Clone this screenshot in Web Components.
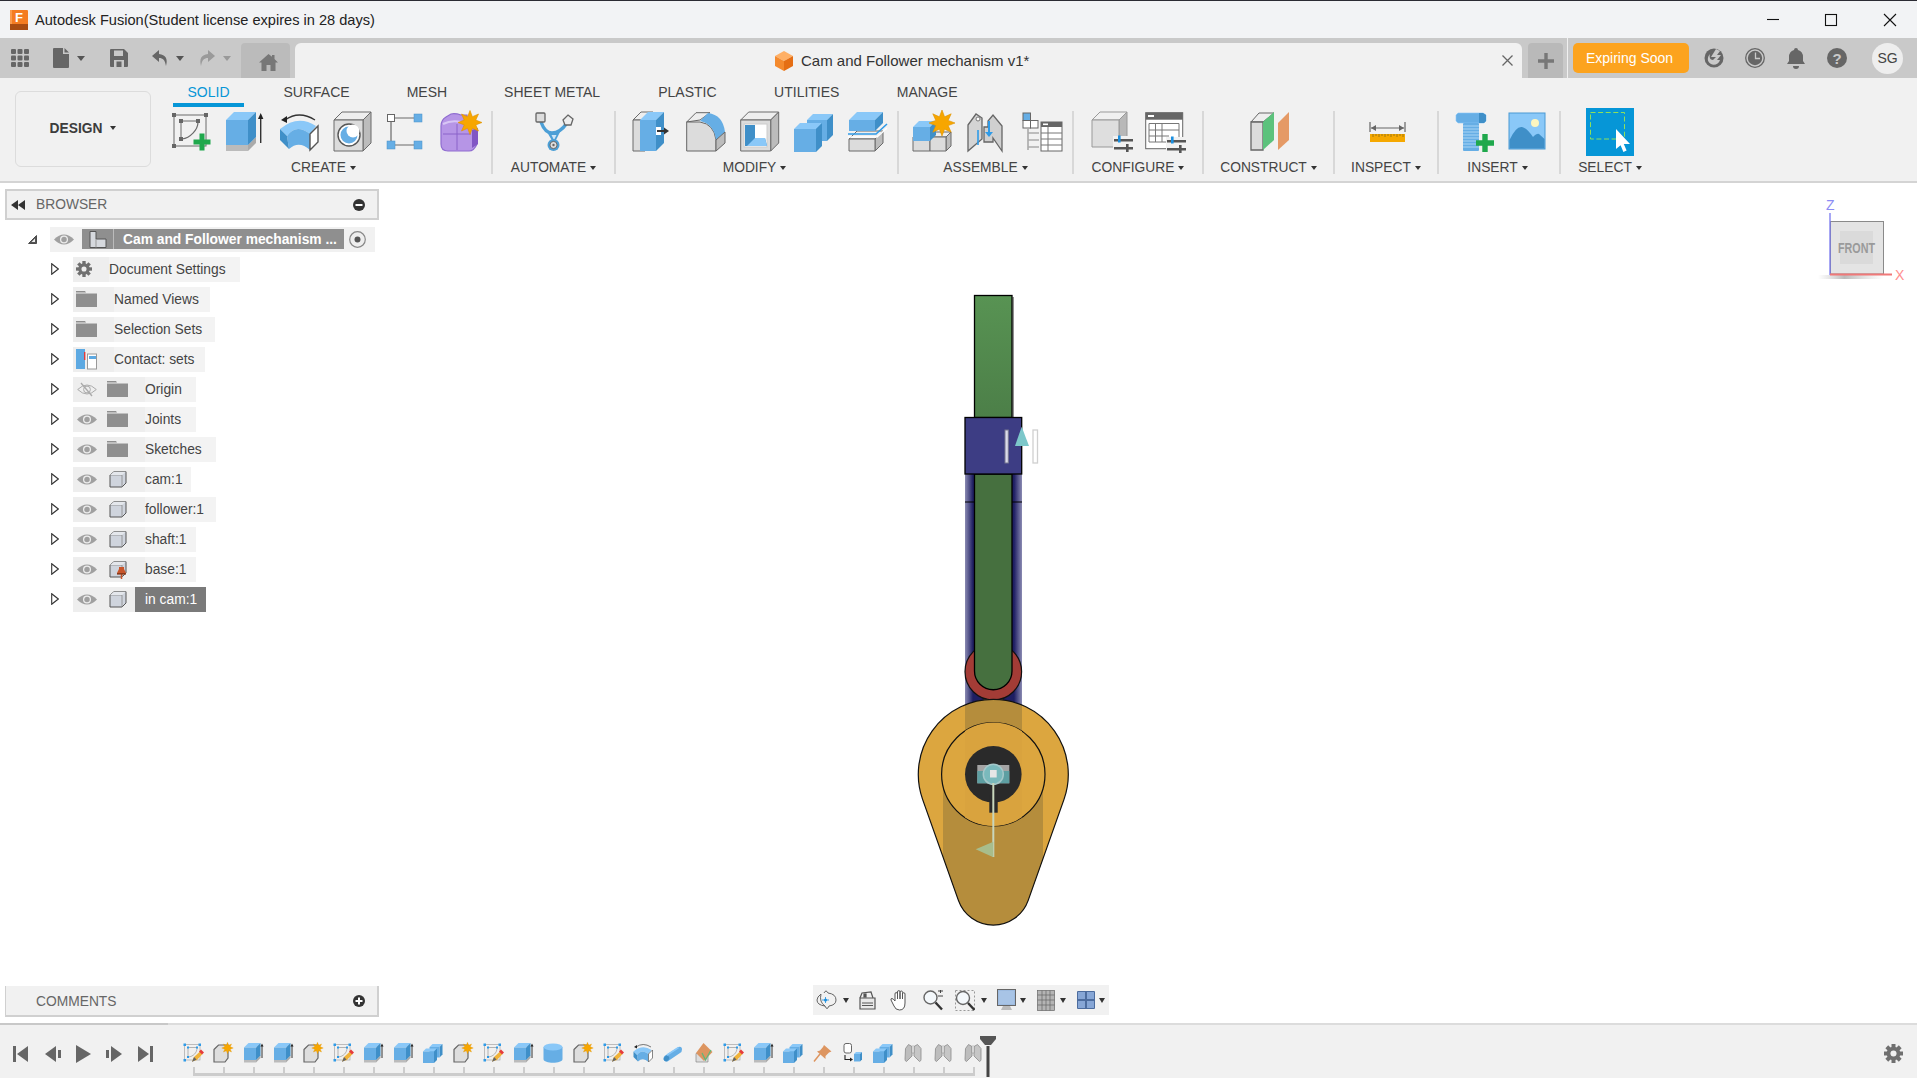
<!DOCTYPE html>
<html>
<head>
<meta charset="utf-8">
<title>Autodesk Fusion</title>
<style>
  html, body { margin: 0; padding: 0; background: #fff; }
  body { width: 1917px; height: 1078px; overflow: hidden; display: flex; flex-direction: column; font-family: 'Liberation Sans', sans-serif; }
</style>
</head>
<body>
  <title-bar></title-bar>
  <app-bar></app-bar>
  <ribbon-bar>
    <ribbon-group label="CREATE" style="width:326px;--ip:6px;--lp:9px">
      <fx-icon name="sketch"></fx-icon><fx-icon name="extrude"></fx-icon><fx-icon name="revolve"></fx-icon><fx-icon name="hole"></fx-icon><fx-icon name="nodes"></fx-icon><fx-icon name="form"></fx-icon>
    </ribbon-group>
    <ribbon-group label="AUTOMATE" style="width:121px;--ip:42px">
      <fx-icon name="automate"></fx-icon>
    </ribbon-group>
    <ribbon-group label="MODIFY" style="width:281px;--ip:16px;--lp:4px">
      <fx-icon name="presspull"></fx-icon><fx-icon name="fillet"></fx-icon><fx-icon name="shell"></fx-icon><fx-icon name="combine"></fx-icon><fx-icon name="split"></fx-icon>
    </ribbon-group>
    <ribbon-group label="ASSEMBLE" style="width:173px;--ip:14px">
      <fx-icon name="newcomp"></fx-icon><fx-icon name="joint"></fx-icon><fx-icon name="table"></fx-icon>
    </ribbon-group>
    <ribbon-group label="CONFIGURE" style="width:128px;--ip:17px">
      <fx-icon name="config"></fx-icon><fx-icon name="configtable"></fx-icon>
    </ribbon-group>
    <ribbon-group label="CONSTRUCT" style="width:129px;--ip:46px">
      <fx-icon name="plane"></fx-icon>
    </ribbon-group>
    <ribbon-group label="INSPECT" style="width:102px;--ip:32px">
      <fx-icon name="measure"></fx-icon>
    </ribbon-group>
    <ribbon-group label="INSERT" style="width:120px;--ip:17px;--lp:3px">
      <fx-icon name="bolt"></fx-icon><fx-icon name="picture" style="margin-left:-2px"></fx-icon>
    </ribbon-group>
    <ribbon-group label="SELECT" style="width:98px;--ip:25px;border:0" class="last">
      <fx-icon name="select" size="48" style="margin-top:-4px"></fx-icon>
    </ribbon-group>
  </ribbon-bar>
  <model-canvas>
    <browser-panel>
      <tree-root label="Cam and Follower mechanism ..."></tree-root>
      <tree-row icon="gear" label="Document Settings" style="--iw:36px;--w:167px"></tree-row>
      <tree-row icon="folder" label="Named Views" style="--w:137px"></tree-row>
      <tree-row icon="folder" label="Selection Sets" style="--w:142px"></tree-row>
      <tree-row icon="contact" label="Contact: sets" style="--w:132px"></tree-row>
      <tree-row eye="off" icon="folder" label="Origin" style="--w:123px"></tree-row>
      <tree-row eye="on" icon="folder" label="Joints" style="--w:123px"></tree-row>
      <tree-row eye="on" icon="folder" label="Sketches" style="--w:143px"></tree-row>
      <tree-row eye="on" icon="body" label="cam:1" style="--w:118px"></tree-row>
      <tree-row eye="on" icon="body" label="follower:1" style="--w:143px"></tree-row>
      <tree-row eye="on" icon="body" label="shaft:1" style="--w:123px"></tree-row>
      <tree-row eye="on" icon="pinned" label="base:1" style="--w:123px"></tree-row>
      <tree-row eye="on" icon="body" label="in cam:1" selected style="--w:133px"></tree-row>
    </browser-panel>
    <comments-panel></comments-panel>
    <cam-model></cam-model>
    <view-cube></view-cube>
    <nav-bar></nav-bar>
  </model-canvas>
  <time-line></time-line>

<script>
const BLUE = { top: '#8ac8f8', front: '#66aee5', side: '#3f8fc8' };
const GREY = { top: '#eeeeee', front: '#dcdcdc', side: '#bcbcbc', line: '#6a6a6a' };

function star(cx, cy, r, n, fill) {
    let pts = [];
    for (let i = 0; i < n * 2; i++) {
        const a = Math.PI * i / n - Math.PI / 2;
        const rr = i % 2 ? r * 0.52 : r;
        pts.push((cx + rr * Math.cos(a)).toFixed(1) + ',' + (cy + rr * Math.sin(a)).toFixed(1));
    }
    return `<polygon points="${pts.join(' ')}" fill="${fill || '#f7a600'}" stroke="#dd9200" stroke-width=".6"/>`;
}

function gear(c, r, col, hole) {
    let s = '';
    for (let i = 0; i < 4; i++) {
        const a = i * Math.PI / 4, dx = Math.cos(a) * r, dy = Math.sin(a) * r;
        s += `<line x1="${c - dx}" y1="${c - dy}" x2="${c + dx}" y2="${c + dy}" stroke="${col}" stroke-width="${r * 0.42}"/>`;
    }
    return s + `<circle cx="${c}" cy="${c}" r="${r * 0.72}" fill="${col}"/><circle cx="${c}" cy="${c}" r="${r * 0.32}" fill="${hole}"/>`;
}

function poly(points, fill, stroke, w) {
    return `<polygon points="${points}" fill="${fill}"${stroke ? ` stroke="${stroke}" stroke-width="${w || 1}" stroke-linejoin="round"` : ''}/>`;
}

function cube(x, y, w, h, d, c) {
    c = c || BLUE;
    const st = c.line ? c.line : '';
    return poly(`${x},${y} ${x + d},${y - d} ${x + w + d},${y - d} ${x + w},${y}`, c.top, st)
        + poly(`${x + w},${y} ${x + w + d},${y - d} ${x + w + d},${y + h - d} ${x + w},${y + h}`, c.side, st)
        + poly(`${x},${y} ${x + w},${y} ${x + w},${y + h} ${x},${y + h}`, c.front, st);
}

function sliders(x, y) {
    return `<rect x="${x}" y="${y}" width="19" height="2.5" fill="#555"/><rect x="${x}" y="${y + 8}" width="19" height="2.5" fill="#555"/>`
        + `<rect x="${x + 4}" y="${y - 3.5}" width="2.6" height="7" fill="#1a8fe0"/><rect x="${x + 12}" y="${y + 5}" width="2.6" height="8" fill="#555"/>`;
}

const plus = (cx, cy, a, t) => `<path d="M${cx - t / 2} ${cy - a}h${t}v${a - t / 2}h${a - t / 2}v${t}h${-(a - t / 2)}v${a - t / 2}h${-t}v${-(a - t / 2)}h${-(a - t / 2)}v${-t}h${a - t / 2}z" fill="#1fa84c"/>`;

const ICONS = {
    sketch: `<g fill="none" stroke="#6a6a6a"><rect x="3" y="3" width="32" height="31"/><path d="M10 9H27"/><path d="M10 9V27"/><path d="M27 10C27 18 19 26 11 27" stroke-width="1.2"/></g>
        <g fill="#666"><rect x="1" y="1" width="4" height="4"/><rect x="33" y="1" width="4" height="4"/><rect x="1" y="32" width="4" height="4"/><rect x="8" y="7" width="4" height="4"/><rect x="25" y="7" width="4" height="4"/><rect x="8" y="25" width="4" height="4"/></g>` + plus(31, 30, 8.5, 5),
    extrude: cube(1, 33, 22, 6, 8, { top: '#ccc', side: '#aaa', front: '#bbb' }) + cube(1, 8, 22, 25, 8)
        + `<path d="M35.7 31V6" stroke="#333" stroke-width="1.4"/><path d="M33 7L35.7 1 38.4 7z" fill="#222"/>`,
    revolve: `<path d="M6 8Q20 -2 36 8" fill="none" stroke="#333" stroke-width="1.3"/><path d="M2 8L8 4 8 11z" fill="#222"/>
        <path d="M1 17Q19 2 37 14L31 22Q17 11 8 24z" fill="${BLUE.top}"/><path d="M8 24Q17 11 31 22V38Q20 28 10 37z" fill="${BLUE.front}"/><path d="M1 17L8 24 10 37 1 28z" fill="${BLUE.side}"/>
        <path d="M31 22L39 14V30L31 38z" fill="#fff" stroke="#555" stroke-width="1.4"/>`,
    hole: cube(1, 8, 29, 31, 8, GREY) + `<circle cx="16" cy="23" r="11" fill="#fff" stroke="#555" stroke-width="1.4"/><circle cx="16" cy="23" r="8.5" fill="${BLUE.front}"/><circle cx="20" cy="19" r="6.5" fill="#fff"/>`,
    nodes: `<g stroke="#6a6a6a" stroke-width="1.2"><path d="M8 6H27M4 10V29M8 33H27"/></g><rect x=".5" y="2.5" width="7" height="7" fill="#fff" stroke="#666"/>
        <rect x="27" y="2" width="8" height="8" fill="#66aee5" stroke="#4a90c8" stroke-width=".5"/><rect x="0" y="29" width="8" height="8" fill="#66aee5" stroke="#4a90c8" stroke-width=".5"/><rect x="27" y="29" width="8" height="8" fill="#66aee5" stroke="#4a90c8" stroke-width=".5"/>`,
    form: `<path d="M0 14Q0 8 5 5L10 2Q14 1 20 3H26V8L36 18V32Q33 39 28 39H7Q0 39 0 32z" fill="#b695e6" stroke="#8f6cd0" stroke-width="1.2"/><path d="M31 18L37 16V32L31 36z" fill="#8157c4"/>
        <path d="M2 22H30M16 12V38" stroke="#8a63c9" stroke-width="1"/><path d="M2 12Q10 8 20 10" stroke="#d8c6f5" stroke-width="2" fill="none"/>` + star(29, 10.5, 12, 8),
    automate: `<path d="M6 10Q10 21 17 21Q25 21 32 11" fill="none" stroke="#4c9fd6" stroke-width="3.4"/><path d="M12 20H25L19 32z" fill="#4c9fd6"/><path d="M16.5 23H21.5L19 28z" fill="#cfe6f7"/>
        <rect x="1" y="1" width="9" height="9" rx="1" fill="#ddd" stroke="#666" stroke-width="1.3"/><path d="M33 3L38 7 36 13 30 13 28 8z" fill="#eee" stroke="#666" stroke-width="1.3"/>
        <circle cx="18.5" cy="33" r="6" fill="#4c9fd6"/><circle cx="18.5" cy="33" r="3.6" fill="#ddd" stroke="#666"/><circle cx="18.5" cy="33" r="1.2" fill="#666"/>`,
    presspull: cube(1, 8, 12, 31, 8, GREY) + cube(8, 8, 16, 31, 8) + `<rect x="24" y="15" width="5" height="8" fill="#fff"/><path d="M25 19H33" stroke="#333" stroke-width="2"/><path d="M32 15.5L37 19 32 22.5z" fill="#333"/>`,
    fillet: `<path d="M.7 10L10 .7H24L14 8z" fill="${GREY.top}" stroke="#666"/><path d="M.7 10H14Q28 12 30 28V39H.7z" fill="${GREY.front}" stroke="#666"/>
        <path d="M14 9L22 1Q37 3 39 20L30 28Q28 12 14 9z" fill="${BLUE.front}"/><path d="M30 28L39 20V31L30 39z" fill="${GREY.side}" stroke="#666"/>`,
    shell: cube(.7, 8, 30, 31, 8, GREY) + `<rect x="4" y="12" width="23" height="23" fill="#fff" stroke="#ccc"/><path d="M5 13H15V26H25L27 34H5z" fill="${BLUE.side}"/><path d="M15 26H25L27 34H7z" fill="${BLUE.top}"/><rect x="15" y="14" width="11" height="12" fill="#fff"/>`,
    combine: cube(13, 8, 20, 21, 6) + cube(0, 17, 22, 23, 6),
    split: cube(1, 27, 26, 12, 8, GREY) + cube(1, 8, 26, 11, 8) + `<path d="M0 22H28L39 12" fill="none" stroke="#2f9be8" stroke-width="1.6"/><path d="M0 25H29L39 16" fill="none" stroke="#fff" stroke-width="1.4"/>`,
    newcomp: cube(0, 25, 17, 14, 0, GREY) + cube(17, 25, 16, 14, 5, GREY) + cube(0, 15, 17, 14, 6) + star(29, 11, 13, 8),
    joint: `<path d="M1 13L9 2 15 6V27L1 39z" fill="#d4d4d4" stroke="#666" stroke-width="1.3"/><path d="M35 14L26 3 21 9V15H17V30H26V26L35 39z" fill="#d0d0d0" stroke="#666" stroke-width="1.3"/>
        <circle cx="11" cy="7" r="2" fill="#fff" stroke="#777"/><path d="M11 18V33" stroke="#2f9be8" stroke-width="1.6"/><path d="M22 9V22" stroke="#2f9be8" stroke-width="2"/><path d="M18 20H26L22 25z" fill="#2f9be8"/>`,
    table: `<rect x="2" y="1" width="7.5" height="7.5" fill="#66aee5" stroke="#666"/><rect x="2" y="8.5" width="7.5" height="7.5" fill="#fff" stroke="#666"/><rect x="9.5" y="8.5" width="7.5" height="7.5" fill="#fff" stroke="#666"/>
        <path d="M7 16V38M7 21H18M7 28H18M7 35H18" stroke="#aaa" stroke-width="1.6" fill="none"/><rect x="20" y="10" width="21" height="29" fill="#fff" stroke="#666"/><rect x="20" y="10" width="21" height="5" fill="#666"/><rect x="22" y="11.5" width="5" height="1.6" fill="#fff"/>
        <path d="M20 21H41M20 27H41M20 33H41M27 15V39" stroke="#777" fill="none"/>`,
    config: cube(1, 8, 27, 27, 8, { top: '#f0f0f0', side: '#b8b8b8', front: '#dedede', line: '#999' }) + `<rect x="22" y="24" width="20" height="15" fill="#f1f1f1"/>` + sliders(23, 27),
    configtable: `<rect x=".7" y=".7" width="37" height="36" fill="#fff" stroke="#666"/><rect x=".7" y=".7" width="37" height="7" fill="#666"/><rect x="3" y="3" width="6" height="2" fill="#fff"/>
        <path d="M4 11.5H34V30M4 11.5V30H24M4 18H34M4 24H24M10.5 11.5V30M17 11.5V30" fill="none" stroke="#777"/><rect x="21" y="25" width="20" height="15" fill="#f1f1f1"/>` + sliders(22, 28),
    plane: `<path d="M1 10L9 1H24L13 10z" fill="#eee" stroke="#666"/><path d="M1 10H13V38H1z" fill="#dcdcdc" stroke="#666" stroke-width="1.3"/><path d="M13 10L24 0V28L13 38z" fill="#5cc27c"/><path d="M28 11L39 0V28L28 38z" fill="#e59a66"/>`,
    measure: `<path d="M3 10V20M38 10V20M4 16H37" stroke="#666" stroke-width="1.2" fill="none"/><path d="M4 16L9 13V19zM37 16L32 13V19z" fill="#666"/><rect x="3" y="22" width="35" height="8" fill="#f5a800"/>
        <path d="M6 22v3M9 22v2M12 22v3M15 22v2M18 22v3M21 22v2M24 22v3M27 22v2M30 22v3M33 22v2M36 22v3" stroke="#8a6a10" stroke-width=".8"/>`,
    bolt: `<path d="M0 3L2 1H27L30 3V9L28 11H2L0 9z" fill="#66aee5" stroke="#8ac8f8" stroke-width=".6"/><path d="M23 1H27L30 3V9L28 11H23z" fill="${BLUE.side}"/>
        <rect x="7" y="11" width="16" height="28" rx="1" fill="#66aee5"/><path d="M7 14H23M7 17H23M7 20H23M7 23H23M7 26H23M7 29H23M7 32H23M7 35H23" stroke="#a9d5f5" stroke-width="1"/>` + plus(29, 31, 9, 5.4),
    picture: `<rect x="1" y="1" width="36" height="36" fill="#8ac8f8" stroke="#4a9ad4"/><circle cx="27" cy="11" r="4" fill="#fdf6c0"/><path d="M1.5 28Q8 14 14 15Q19 16 25 25Q29 21 31 22L36.5 27V36.5H1.5z" fill="#3f8fc8"/>`,
    select: `<rect width="48" height="48" fill="#0696d7"/><rect x="4.5" y="4.5" width="34" height="26.5" fill="none" stroke="#8fe05a" stroke-dasharray="5 2.6"/><path d="M30 21V41L34.6 37.2 37.4 44 40.6 42.6 37.8 36H44z" fill="#fff"/>`,
    /* timeline features */
    tlsketch: `<rect x="3" y="3" width="31" height="31" fill="none" stroke="#9a9a9a" stroke-width="1.2"/><path d="M10 9V28M10 9H28M28 10C28 20 20 27 11 28" fill="none" stroke="#888" stroke-width="1.2"/><g fill="#2f9be8"><rect x="1" y="1" width="5" height="5"/><rect x="31" y="1" width="5" height="5"/><rect x="1" y="32" width="5" height="5"/><rect x="8" y="7" width="4" height="4"/><rect x="26" y="7" width="4" height="4"/><rect x="8" y="26" width="4" height="4"/></g>
        <path d="M18 37L22 28 34 17 39 22 28 34z" fill="#f0b33a"/><path d="M32 17L36 13 42 19 38 23z" fill="#e53c3c"/><path d="M18 38L22 28 27 33z" fill="#666"/>`,
    tlstar: `<path d="M2 13L11 4H30V30L24 38H2z" fill="#dedede" stroke="#666" stroke-width="2.4"/>` + star(29, 10, 11.5, 8),
    tlextrude: cube(2, 34, 24, 5, 9, { top: '#ccc', side: '#aaa', front: '#bbb' }) + cube(2, 9, 24, 25, 9) + `<path d="M38 30V6" stroke="#333" stroke-width="2"/><path d="M35 7L38 1 41 7z" fill="#222"/>`,
    tlcyl: `<path d="M1 8V32C1 42 39 42 39 32V8z" fill="${BLUE.front}"/><ellipse cx="20" cy="8" rx="19" ry="7" fill="${BLUE.top}"/>`,
    tlpipe: `<path d="M3 26L31 8Q38 6 38 13Q38 18 34 20L9 37Q2 38 1 32Q1 28 3 26z" fill="${BLUE.front}"/><ellipse cx="7" cy="31" rx="5" ry="6" transform="rotate(40 7 31)" fill="${BLUE.side}"/><path d="M8 24L31 9" stroke="${BLUE.top}" stroke-width="3"/>`,
    tldiamond: `<path d="M6 21V38H30V21z" fill="#ddd" stroke="#888" stroke-width="1.4"/><path d="M21 0L39 18 22 36 6 20z" fill="#dd9560"/><path d="M18 20L25 34 36 14" fill="none" stroke="#5cb87a" stroke-width="2.4"/>`,
    tlpin: `<path d="M22 4L37 17 32 19 25 26 25 32 8 17 14 15 20 8z" fill="#dd9560"/><path d="M14 22L2 37" stroke="#dd9560" stroke-width="3"/>`,
    tlmove: `<rect x="2" y="1" width="15" height="19" rx="4" fill="#fff" stroke="#666" stroke-width="2"/><path d="M4 24V33H16" fill="none" stroke="#222" stroke-width="2.2"/><path d="M14 29L20 33 14 37z" fill="#222"/>` + cube(22, 22, 12, 15, 4),
    tljoint: `<path d="M5 11L11 3 18 7V26L7 37Q4 36 4 33z" fill="#bdbdbd" stroke="#8a8a8a" stroke-width="1.6"/><path d="M22 7L29 3 36 11V33Q36 36 33 37L22 26z" fill="#c6c6c6" stroke="#8a8a8a" stroke-width="1.6"/><path d="M18 7Q20 3 22 7V20H18z" fill="#eee" stroke="#8a8a8a"/>`
};
ICONS.tlcombine = ICONS.combine;

class FxIcon extends HTMLElement {
    constructor() {
        super();
        const size = this.getAttribute('size') || 40;
        const box = this.getAttribute('name') === 'select' ? 48 : 40;
        this.attachShadow({ mode: 'open' }).innerHTML = `
            <style>:host{display:block;width:${size}px;height:${size}px;flex:none} svg{display:block;overflow:visible}</style>
            <svg width="${size}" height="${size}" viewBox="0 0 ${box} ${box}">${ICONS[this.getAttribute('name')] || ''}</svg>`;
    }
}
customElements.define('fx-icon', FxIcon);

class TitleBar extends HTMLElement {
    constructor() {
        super();
        this.attachShadow({ mode: 'open' }).innerHTML = `
        <style>
            :host { display: flex; align-items: center; height: 37px; flex: none; background: #f2f3f5; border-top: 1px solid #2b2b33; font: 14.6px 'Liberation Sans', sans-serif; color: #222; }
            svg { display: block; flex: none; }
            .logo { margin-left: 10px; }
            .txt { margin-left: 7px; flex: 1; white-space: nowrap; }
            .ctl { margin-right: 19px; }
        </style>
        <svg class="logo" width="18" height="20" viewBox="0 0 18 20"><rect width="18" height="20" rx="1" fill="#f47c22"/><rect y="14" width="18" height="6" fill="#a84c12"/><rect width="2" height="14" fill="#fa9a4c"/><text x="9" y="12" text-anchor="middle" font-family="Liberation Sans" font-weight="700" font-size="13" fill="#fff">F</text></svg>
        <span class="txt">Autodesk Fusion(Student license expires in 28 days)</span>
        <svg width="132" height="14" viewBox="0 0 132 14" class="ctl" fill="none" stroke="#111" stroke-width="1.1"><path d="M1 6.500H13"/><rect x="59.500" y="1.500" width="11" height="11"/><path d="M118 1L130 13M130 1L118 13"/></svg>`;
    }
}
customElements.define('title-bar', TitleBar);

class AppBar extends HTMLElement {
    constructor() {
        super();
        this.attachShadow({ mode: 'open' }).innerHTML = `
        <style>
            :host { display: flex; align-items: center; height: 40px; flex: none; background: #c9c9c9; padding-left: 11px; font-family: 'Liberation Sans', sans-serif; }
            svg { display: block; flex: none; }
            .caret { width: 0; height: 0; flex: none; border: 4px solid transparent; border-top: 5px solid #555; border-bottom: 0; margin-left: 8px; }
            .caret.dim { border-top-color: #999; }
            .home { align-self: flex-end; height: 35px; width: 49px; margin-left: 10px; background: #bbb; border-radius: 4px 4px 0 0; display: flex; align-items: center; justify-content: center; flex: none; padding: 3px 0 0 5px; box-sizing: border-box; }
            .doc { align-self: flex-end; height: 35px; width: 1227px; margin-left: 5px; box-sizing: border-box; background: #f1f1f1; border-radius: 6px 6px 0 0; display: flex; align-items: center; padding: 0 9px 0 480px; font-size: 15px; color: #333; flex: none; }
            .doc span { margin-left: 8px; white-space: nowrap; }
            .close { margin-left: auto; }
            .plus { align-self: flex-end; height: 35px; width: 35px; margin-left: 6px; background: #b9b9b9; border-radius: 4px 4px 0 0; display: flex; align-items: center; justify-content: center; flex: none; }
            .div { width: 1px; align-self: stretch; background: #f0f0f0; margin-left: 4px; flex: none; }
            .exp { width: 116px; height: 30px; margin-left: 5px; background: #fca31e; color: #fff; border-radius: 5px; font-size: 14px; display: flex; align-items: center; justify-content: center; flex: none; padding-right: 3px; box-sizing: border-box; }
            .right { display: flex; align-items: center; gap: 21px; margin-left: 15px; }
            .sg { width: 31px; height: 31px; margin-left: 25px; border-radius: 50%; background: #eee; color: #444; font-size: 14px; display: flex; align-items: center; justify-content: center; flex: none; }
        </style>
        <svg width="18" height="18" viewBox="0 0 18 18" fill="#666"><rect width="5" height="5" rx="1"/><rect x="6.500" width="5" height="5" rx="1"/><rect x="13" width="5" height="5" rx="1"/><rect y="6.500" width="5" height="5" rx="1"/><rect x="6.500" y="6.500" width="5" height="5" rx="1"/><rect x="13" y="6.500" width="5" height="5" rx="1"/><rect y="13" width="5" height="5" rx="1"/><rect x="6.500" y="13" width="5" height="5" rx="1"/><rect x="13" y="13" width="5" height="5" rx="1"/></svg>
        <svg style="margin-left:24px" width="16" height="20" viewBox="0 0 16 20"><path d="M1 0H10V6H16V19Q16 20 15 20H1Q0 20 0 19V1Q0 0 1 0zM11.500 0L16 4.500H11.500z" fill="#666"/></svg>
        <div class="caret"></div>
        <svg style="margin-left:25px" width="18" height="18" viewBox="0 0 18 18"><path d="M1 0H14L18 4V17Q18 18 17 18H1Q0 18 0 17V1Q0 0 1 0z" fill="#666"/><rect x="4" y="1.500" width="9" height="5.500" fill="#c9c9c9"/><rect x="4" y="11" width="10" height="7" fill="#c9c9c9"/><rect x="6.500" y="12.500" width="5" height="5.500" fill="#666"/></svg>
        <svg style="margin-left:24px" width="17" height="16" viewBox="0 0 17 16"><path d="M7 0L0 6 7 12V8C11 8 13 10 14 16Q17 5 7 4z" fill="#666"/></svg>
        <div class="caret" style="margin-left:7px"></div>
        <svg style="margin-left:14px" width="17" height="16" viewBox="0 0 17 16"><path d="M10 0L17 6 10 12V8C6 8 4 10 3 16Q0 5 10 4z" fill="#9a9a9a"/></svg>
        <div class="caret dim" style="margin-left:8px"></div>
        <div class="home"><svg width="19" height="18" viewBox="0 0 19 18"><path d="M9.500 1L0 9.500H2.500V18H7.500V12H11.500V18H16.500V9.500H19L15.500 6V2H13V3.700z" fill="#777"/></svg></div>
        <div class="doc">
            <svg width="18" height="20" viewBox="0 0 18 20"><path d="M9 0L18 5 9 10 0 5z" fill="#ffb066"/><path d="M0 5L9 10V20L0 15z" fill="#f48a2e"/><path d="M18 5L9 10V20L18 15z" fill="#e56e14"/></svg>
            <span>Cam and Follower mechanism v1*</span>
            <svg class="close" width="11" height="11" viewBox="0 0 11 11"><path d="M.5.5L10.500 10.500M10.500.5L.5 10.500" stroke="#666" stroke-width="1.300"/></svg>
        </div>
        <div class="plus"><svg width="16" height="16" viewBox="0 0 16 16"><path d="M6.300 0H9.700V6.300H16V9.700H9.700V16H6.300V9.700H0V6.300H6.300z" fill="#777"/></svg></div>
        <div class="div"></div>
        <div class="exp">Expiring Soon</div>
        <div class="right">
            <svg width="20" height="20" viewBox="0 0 20 20"><circle cx="10" cy="10" r="9.500" fill="#666"/><path d="M12 1L7 9H12L9 12C6 12 5 9 6 6 3 9 3 14 7 16 10 18 15 16 16 12L13 12 17 7H13L16 3z" fill="#c9c9c9"/></svg>
            <svg width="20" height="20" viewBox="0 0 20 20"><circle cx="10" cy="10" r="9.300" fill="#c9c9c9" stroke="#666" stroke-width="1.300"/><circle cx="10" cy="10" r="7.200" fill="#666"/><path d="M10.500 4.500V10.500H15" stroke="#c9c9c9" stroke-width="1.300" fill="none"/></svg>
            <svg width="20" height="21" viewBox="0 0 20 21"><path d="M10 0Q12 0 12 2Q17 3.500 17 9V13L19 16H1L3 13V9Q3 3.500 8 2Q8 0 10 0z" fill="#666"/><path d="M7 18H13Q13 21 10 21 7 21 7 18z" fill="#666"/></svg>
            <svg width="20" height="20" viewBox="0 0 20 20"><circle cx="10" cy="10" r="10" fill="#666"/><text x="10" y="15.500" text-anchor="middle" font-family="Liberation Sans" font-weight="700" font-size="15" fill="#c9c9c9">?</text></svg>
        </div>
        <div class="sg">SG</div>`;
    }
}
customElements.define('app-bar', AppBar);

const ribbonTpl = document.createElement('template');
ribbonTpl.innerHTML = `
    <style>
        :host { display: flex; height: 103px; flex: none; background: #f1f1f1; border-bottom: 2px solid #d4d4d4; padding-left: 15px; font-family: 'Liberation Sans', sans-serif; }
        .design { width: 136px; height: 76px; box-sizing: border-box; margin-top: 13px; padding-bottom: 2px; border: 1.5px solid #dcdcdc; border-radius: 6px; display: flex; align-items: center; justify-content: center; gap: 8px; font-weight: 700; font-size: 13.8px; color: #3c3c3c; flex: none; }
        .caret { width: 0; height: 0; border: 3.5px solid transparent; border-top: 4.5px solid #333; border-bottom: 0; }
        .col { margin-left: 14px; }
        .tabs { display: flex; gap: 25px; height: 29px; padding-left: 8px; margin-bottom: 4px; font-size: 14px; color: #444; }
        .tabs div { padding: 7px 14.500px 0; box-sizing: border-box; height: 29px; white-space: nowrap; line-height: 14px; }
        .tabs .on { color: #0696d7; border-bottom: 4px solid #0696d7; }
        .groups { display: flex; }
    </style>
    <div class="design">DESIGN<span class="caret"></span></div>
    <div class="col">
        <div class="tabs"><div class="on">SOLID</div><div>SURFACE</div><div style="margin-left:3px">MESH</div><div style="margin-left:3px">SHEET METAL</div><div style="margin-left:4.200px">PLASTIC</div><div style="margin-left:3.500px">UTILITIES</div><div style="margin-left:3.400px">MANAGE</div></div>
        <div class="groups"><slot></slot></div>
    </div>`;
class RibbonBar extends HTMLElement {
    constructor() {
        super();
        this.attachShadow({ mode: 'open' }).appendChild(ribbonTpl.content.cloneNode(true));
    }
}
customElements.define('ribbon-bar', RibbonBar);

class RibbonGroup extends HTMLElement {
    constructor() {
        super();
        this.attachShadow({ mode: 'open' }).innerHTML = `
        <style>
            :host { display: block; height: 63px; flex: none; border-right: 2px solid #d8d8d8; }
            .icons { display: flex; gap: 14px; height: 45px; padding: 1px 0 0 var(--ip, 0); box-sizing: border-box; }
            .lbl { display: flex; align-items: center; justify-content: center; gap: 4px; height: 23px; font-size: 13.8px; color: #444; padding-right: var(--lp, 0); white-space: nowrap; }
            .caret { width: 0; height: 0; border: 3.5px solid transparent; border-top: 4.5px solid #333; border-bottom: 0; }
        </style>
        <div class="icons"><slot></slot></div>
        <div class="lbl">${this.getAttribute('label')}<span class="caret"></span></div>`;
    }
}
customElements.define('ribbon-group', RibbonGroup);

class ModelCanvas extends HTMLElement {
    constructor() {
        super();
        this.attachShadow({ mode: 'open' }).innerHTML = `
        <style>
            :host { display: flex; flex: 1; min-height: 0; flex-direction: column; justify-content: space-between; position: relative; background: #fff; padding: 6px 0 6px 5px; box-sizing: border-box; }
        </style>
        <slot></slot>`;
    }
}
customElements.define('model-canvas', ModelCanvas);

class BrowserPanel extends HTMLElement {
    constructor() {
        super();
        this.attachShadow({ mode: 'open' }).innerHTML = `
        <style>
            :host { display: block; width: 374px; margin-left: -5px; padding-left: 5px; font-family: 'Liberation Sans', sans-serif; position: relative; z-index: 1; }
            .head { display: flex; align-items: center; height: 31px; box-sizing: border-box; background: #f1f1f1; border: 2px solid #d0d0d0; font-size: 13.8px; color: #666; margin-bottom: 6.500px; }
            .head svg { display: block; flex: none; }
            .t { margin-left: 11px; flex: 1; }
            .rows { margin-left: -5px; display: flex; flex-direction: column; gap: 5px; }
        </style>
        <div class="head">
            <svg style="margin-left:4px" width="14" height="10" viewBox="0 0 14 10"><path d="M7 0V10L0 5zM14 0V10L7 5z" fill="#333"/></svg>
            <span class="t">BROWSER</span>
            <svg style="margin-right:12px" width="12" height="12" viewBox="0 0 12 12"><circle cx="6" cy="6" r="6" fill="#333"/><rect x="2.500" y="5" width="7" height="2" fill="#fff"/></svg>
        </div>
        <div class="rows"><slot></slot></div>`;
    }
}
customElements.define('browser-panel', BrowserPanel);

const EYE_ON = `<svg width="20" height="13" viewBox="0 0 20 13"><path d="M0 6.500Q10 -3.500 20 6.500Q10 16.500 0 6.500z" fill="#a0a0a0"/><circle cx="10" cy="6.500" r="3.400" fill="none" stroke="#ececec" stroke-width="1.300"/></svg>`;
const EYE_OFF = `<svg width="20" height="15" viewBox="0 0 20 15"><path d="M.7 7.500Q10 -1.500 19.300 7.500Q10 16.500 .7 7.500z" fill="none" stroke="#aaa"/><circle cx="10" cy="7.500" r="3.400" fill="none" stroke="#aaa"/><path d="M4 1L15 14" stroke="#aaa" stroke-width="1.300"/></svg>`;
const folder = `<svg width="21" height="16" viewBox="0 0 21 16"><path d="M0 0H9L10 1.500H0zM0 2.500H21V16H0z" fill="#8f8f8f"/></svg>`;
const bodyIcon = (extra) => `<svg width="18" height="17" viewBox="0 0 18 17" style="overflow:visible;margin-left:2px"><path d="M1 4L5 .7H17V12L13 16H1z" fill="#cfd4dd" stroke="#555" stroke-width="1" stroke-linejoin="round"/><path d="M1 4H13V16" fill="none" stroke="#888" stroke-width=".8"/><path d="M1 4H13L17 .7H5z" fill="#e4e7ec"/>${extra || ''}</svg>`;
const TREE_ICONS = {
    gear: `<svg width="16" height="16" viewBox="0 0 16 16">${gear(8, 8, '#707070', '#eeeeee')}</svg>`,
    folder: folder,
    contact: `<svg width="21" height="21" viewBox="0 0 21 21"><rect width="9" height="20" fill="#5da9e2"/><rect x="8" y="3" width="1.400" height="8" fill="#e23b3b"/><rect x="11.500" y="5" width="9" height="15" fill="#fff" stroke="#999"/><rect x="13" y="7" width="7" height="3" fill="#5da9e2"/></svg>`,
    body: bodyIcon(),
    pinned: bodyIcon(`<path d="M10 6H15V8L17 12H8L10 8z" fill="#c8552a"/><path d="M12.500 12V18" stroke="#c8552a" stroke-width="1.500"/><rect x="8" y="12" width="9" height="1.600" fill="#8a3a1a"/>`)
};

class TreeRoot extends HTMLElement {
    constructor() {
        super();
        this.attachShadow({ mode: 'open' }).innerHTML = `
        <style>
            :host { display: flex; align-items: center; height: 25px; padding-left: 28px; font: 13.8px 'Liberation Sans', sans-serif; }
            svg { display: block; flex: none; }
            .pill { margin-left: 13px; width: 325px; height: 25px; background: #f1f1f1; display: flex; align-items: center; flex: none; }
            .eye { margin-left: 4px; }
            .blk { margin-left: 8px; width: 262px; height: 20px; background: #8f8f8f; display: flex; align-items: center; flex: none; }
            .ic { width: 31px; height: 20px; border-right: 1px solid #bbb; display: flex; align-items: center; justify-content: center; flex: none; }
            .lb { margin-left: 9px; font-weight: 700; color: #fff; white-space: nowrap; }
            .radio { margin-left: 5px; }
        </style>
        <svg width="9" height="9" viewBox="0 0 9 9"><path d="M8.500.5V8.500H.5z" fill="#555" stroke="#222" stroke-width=".7"/><path d="M7 3.500V7H3.500z" fill="#eee"/></svg>
        <div class="pill">
            <span class="eye">${EYE_ON}</span>
            <div class="blk">
                <div class="ic"><svg width="18" height="17" viewBox="0 0 18 17"><path d="M1 .5H7V8H17V16.500H1z" fill="#d6d9de" stroke="#555" stroke-width="1"/><path d="M7 8V16.500" stroke="#999"/></svg></div>
                <span class="lb">${this.getAttribute('label')}</span>
            </div>
            <svg class="radio" width="17" height="17" viewBox="0 0 17 17"><circle cx="8.500" cy="8.500" r="7.800" fill="#eee" stroke="#888" stroke-width="1.200"/><circle cx="8.500" cy="8.500" r="3" fill="#555"/></svg>
        </div>`;
    }
}
customElements.define('tree-root', TreeRoot);

class TreeRow extends HTMLElement {
    constructor() {
        super();
        const eye = this.getAttribute('eye');
        const sel = this.hasAttribute('selected');
        this.attachShadow({ mode: 'open' }).innerHTML = `
        <style>
            :host { display: flex; align-items: center; height: 25px; padding-left: 51px; font: 13.8px 'Liberation Sans', sans-serif; color: #444; }
            svg { display: block; flex: none; }
            .pill { margin-left: 14px; width: var(--w); height: 25px; display: flex; align-items: center; background: #eeeeee; flex: none; }
            .eye { width: 30px; padding-left: 4px; box-sizing: border-box; flex: none; }
            .ic { width: var(--iw, 41px); padding-left: ${eye ? '4px' : '3px'}; box-sizing: border-box; flex: none; }
            .lb { flex: 1; height: 25px; line-height: 25px; background: #f3f3f3; white-space: nowrap; }
            .with-eye .ic { width: 42px; }
            .lb.sel { background: #7a7a7a; color: #fff; padding-left: 10px; margin-left: -10px; }
        </style>
        <svg width="8" height="12" viewBox="0 0 8 12"><path d="M.7.7L7.300 6 .7 11.300z" fill="#fff" stroke="#333" stroke-width="1.100"/></svg>
        <div class="pill ${eye ? 'with-eye' : ''}">
            ${eye ? `<span class="eye">${eye === 'on' ? EYE_ON : EYE_OFF}</span>` : ''}
            <span class="ic">${TREE_ICONS[this.getAttribute('icon')]}</span>
            <span class="lb ${sel ? 'sel' : ''}">${this.getAttribute('label')}</span>
        </div>`;
    }
}
customElements.define('tree-row', TreeRow);

class CommentsPanel extends HTMLElement {
    constructor() {
        super();
        this.attachShadow({ mode: 'open' }).innerHTML = `
        <style>
            :host { display: flex; align-items: center; width: 374px; height: 31px; box-sizing: border-box; background: #f1f1f1; border: 2px solid #d0d0d0; border-top: 0; border-left-width: 1px; font: 13.8px 'Liberation Sans', sans-serif; color: #666; flex: none; position: relative; z-index: 1; }
            span { margin-left: 30px; flex: 1; padding-top: 1px; }
            svg { display: block; margin-right: 12px; }
        </style>
        <span>COMMENTS</span>
        <svg width="12" height="12" viewBox="0 0 12 12"><circle cx="6" cy="6" r="6" fill="#333"/><path d="M5 2.500H7V5H9.500V7H7V9.500H5V7H2.500V5H5z" fill="#fff"/></svg>`;
    }
}
customElements.define('comments-panel', CommentsPanel);

class CamModel extends HTMLElement {
    constructor() {
        super();
        this.attachShadow({ mode: 'open' }).innerHTML = `
        <style>
            :host { position: absolute; left: 900px; top: 100px; width: 200px; height: 660px; }
            svg { display: block; }
        </style>
        <svg width="200" height="660" viewBox="900 283 200 660">
            <defs>
                <linearGradient id="strip" x1="0" x2="1" y1="0" y2="0">
                    <stop offset="0" stop-color="#8a8ab2"/><stop offset=".14" stop-color="#1e1e62"/><stop offset=".86" stop-color="#1e1e62"/><stop offset="1" stop-color="#8a8ab2"/>
                </linearGradient>
                <linearGradient id="top" x1="0" x2="0" y1="0" y2="1"><stop offset="0" stop-color="#589353"/><stop offset="1" stop-color="#4c7f48"/></linearGradient>
                <clipPath id="cam"><path d="M922.600 799.400A75 75 0 1 1 1064 799.400L1028.200 900.400A37 37 0 0 1 958.400 900.400z"/></clipPath>
                <clipPath id="inner"><circle cx="993.300" cy="774.300" r="51.700"/></clipPath>
            </defs>
            <rect x="965" y="474" width="57" height="236" fill="url(#strip)"/>
            <path d="M965 502H974M1012 502H1022" stroke="#000" stroke-width="1"/>
            <rect x="974.500" y="295.500" width="37.500" height="122" fill="url(#top)" stroke="#000" stroke-width="1.300"/>
            <path d="M1013 297V417" stroke="#222" stroke-width="1"/>
            <circle cx="993.300" cy="671.700" r="28.300" fill="#a33c36" stroke="#111" stroke-width="1.200"/>
            <path d="M974.500 474V671A18.700 18.700 0 0 0 1012 671V474z" fill="#46703f" stroke="#000" stroke-width="1.300"/>
            <rect x="965" y="417.500" width="56.700" height="56.500" fill="#3d3d84" stroke="#000" stroke-width="1.300"/>
            <rect x="1005" y="430" width="3.300" height="33" fill="#dcdcea" stroke="#77778f" stroke-width="1"/>
            <path d="M1021.700 426.700L1015 446H1029z" fill="#7cc7ca"/>
            <rect x="1033" y="430" width="4.500" height="33" fill="#fff" stroke="#d0d0d0" stroke-width="1.300"/>
            <path d="M922.600 799.400A75 75 0 1 1 1064 799.400L1028.200 900.400A37 37 0 0 1 958.400 900.400z" fill="#dca63f"/>
            <g clip-path="url(#cam)">
                <rect x="943" y="774" width="100" height="160" fill="#b58d3c"/>
                <rect x="965" y="695" width="57" height="90" fill="#b58d3c"/>
            </g>
            <path d="M922.600 799.400A75 75 0 1 1 1064 799.400L1028.200 900.400A37 37 0 0 1 958.400 900.400z" fill="none" stroke="#111" stroke-width="1.200"/>
            <circle cx="993.300" cy="774.300" r="51.700" fill="#dca63f" stroke="#111" stroke-width="1.200"/>
            <g clip-path="url(#inner)"><rect x="965" y="720" width="57" height="110" fill="#d9a33e"/></g>
            <circle cx="993.300" cy="774.300" r="28.300" fill="#2a2a2a"/>
            <rect x="989.300" y="795" width="8.400" height="17.700" fill="#2a2a2a"/>
            <rect x="977.300" y="765" width="32" height="18.300" fill="#a4a4a4"/>
            <rect x="977.300" y="771" width="32" height="12.300" fill="#5e9fa2"/>
            <circle cx="993.300" cy="774.300" r="10" fill="#7ab9bc" stroke="#a4c8ca" stroke-width="1.500"/>
            <rect x="990" y="770" width="6.700" height="7.500" fill="#e6e6e6"/>
            <path d="M993.300 783V857" stroke="#c8d6bc" stroke-width="2"/>
            <path d="M975.700 849.300L993.300 841.700V857.300z" fill="#a8bd8c"/>
        </svg>`;
    }
}
customElements.define('cam-model', CamModel);

class ViewCube extends HTMLElement {
    constructor() {
        super();
        this.attachShadow({ mode: 'open' }).innerHTML = `
        <style>
            :host { position: absolute; left: 1815px; top: 10px; width: 95px; height: 95px; }
            svg { display: block; overflow: visible; }
        </style>
        <svg width="95" height="95" viewBox="1815 193 95 95" font-family="Liberation Sans">
            <defs><linearGradient id="sh" x1="0" x2="1" y1="0" y2="0"><stop offset="0" stop-color="#ccc" stop-opacity="0"/><stop offset=".4" stop-color="#bbb"/><stop offset="1" stop-color="#ccc" stop-opacity="0"/></linearGradient></defs>
            <rect x="1818" y="275" width="66" height="4" fill="url(#sh)"/>
            <rect x="1830.500" y="221.500" width="53" height="52.500" fill="#e4e4e4" stroke="#8a8a8a" stroke-width="1"/>
            <rect x="1840" y="231" width="33" height="33" fill="#dadada"/>
            <text x="1856.500" y="252.500" text-anchor="middle" font-size="15" font-weight="700" fill="#9a9a9a" textLength="37" lengthAdjust="spacingAndGlyphs">FRONT</text>
            <path d="M1830 213V275" stroke="#7878f0" stroke-width="1.300"/>
            <path d="M1830 274.500H1892" stroke="#f07878" stroke-width="2"/>
            <text x="1826" y="209.500" font-size="14" fill="#8c8cf4">Z</text>
            <text x="1895" y="280" font-size="14" fill="#ff8e8e">X</text>
        </svg>`;
    }
}
customElements.define('view-cube', ViewCube);

class NavBar extends HTMLElement {
    constructor() {
        super();
        this.attachShadow({ mode: 'open' }).innerHTML = `
        <style>
            :host { position: absolute; left: 813px; top: 802px; width: 296px; height: 30px; background: #f1f1f1; display: flex; align-items: center; }
            svg { display: block; flex: none; }
            .c { width: 0; height: 0; flex: none; border: 3px solid transparent; border-top: 5px solid #333; border-bottom: 0; }
        </style>
        <svg style="margin-left:3px" width="21" height="22" viewBox="0 0 21 22" fill="none" stroke="#666" stroke-width="1"><path d="M8 4Q10 0 12 4Q20 5 20 11Q20 16 13 17Q11 22 9 17Q1 16 1 11Q1 8 5 5"/><path d="M5 5Q3 13 9 17" /><circle cx="9.500" cy="11" r="1.500" fill="#1a8fe0" stroke="none"/><path d="M6 11H13M9.500 8V14" stroke="#1a8fe0" stroke-width=".8"/></svg>
        <div class="c" style="margin-left:6px"></div>
        <svg style="margin-left:10px" width="17" height="19" viewBox="0 0 17 19" fill="none" stroke="#555" stroke-width="1.200"><path d="M1 7H16V18H1z" fill="#e8e8e8"/><path d="M1 7L3 2 12 1 14 7"/><path d="M3 12H14M3 14.500H14" /><rect x="5" y="3" width="2" height="3" fill="#555"/></svg>
        <svg style="margin-left:14px" width="19" height="21" viewBox="0 0 19 21" fill="#fff" stroke="#555" stroke-width="1"><path d="M5 11V4Q5 2.500 6.200 2.500T7.500 4V9V2Q7.500 .6 8.800 .6T10 2V9V2.500Q10 1 11.300 1T12.500 2.500V9V4Q12.500 2.700 13.700 2.700T15 4V13Q15 20 9.500 20Q5.500 20 4 16L1 10Q.5 8.500 2 8.500Q3 8.500 5 11z"/></svg>
        <svg style="margin-left:14px" width="20" height="21" viewBox="0 0 20 21" fill="none"><circle cx="7.500" cy="7.500" r="6.500" fill="#f4f8fb" stroke="#666" stroke-width="1.400"/><path d="M12.500 12.500L19 19.500" stroke="#333" stroke-width="2.400"/><path d="M15 1H20M17.500 0V3M15 6H20" stroke="#444" stroke-width="1"/></svg>
        <svg style="margin-left:12px" width="20" height="21" viewBox="0 0 20 21" fill="none"><rect x=".5" y=".5" width="19" height="20" stroke="#999" stroke-dasharray="2 2"/><circle cx="8" cy="8" r="6.500" fill="#f4f8fb" stroke="#666" stroke-width="1.400"/><path d="M13 13L19.500 20" stroke="#333" stroke-width="2.400"/></svg>
        <div class="c" style="margin-left:6px"></div>
        <svg style="margin-left:10px" width="19" height="22" viewBox="0 0 19 22"><rect x=".5" y=".5" width="18" height="16" fill="#9dbbe0" stroke="#666"/><rect x="2" y="2" width="15" height="13" fill="#a8c4e6"/><path d="M6 17H13L15 21H4z" fill="#bbb"/></svg>
        <div class="c" style="margin-left:4px"></div>
        <svg style="margin-left:11px" width="18" height="21" viewBox="0 0 18 21" fill="#b4b4b4" stroke="#666" stroke-width=".7"><rect x=".5" y=".5" width="17" height="20"/><path d="M.5 5H17.500M.5 10H17.500M.5 15H17.500M5 .5V20.500M9 .5V20.500M13 .5V20.500" fill="none"/></svg>
        <div class="c" style="margin-left:5px"></div>
        <svg style="margin-left:11px" width="18" height="18" viewBox="0 0 18 18"><rect width="18" height="18" rx="1" fill="#4c6c9e"/><rect x="1" y="1" width="7" height="7" fill="#86a6d6"/><rect x="10" y="1" width="7" height="7" fill="#86a6d6"/><rect x="1" y="10" width="7" height="7" fill="#86a6d6"/><rect x="10" y="10" width="7" height="7" fill="#86a6d6"/></svg>
        <div class="c" style="margin-left:4px"></div>`;
    }
}
customElements.define('nav-bar', NavBar);

const FEATURES = 'sketch star extrude extrude star sketch extrude extrude combine star sketch extrude cyl star sketch revolve pipe diamond sketch extrude combine pin move combine joint joint joint'.split(' ');

class TimeLine extends HTMLElement {
    constructor() {
        super();
        const name = f => f === 'revolve' ? 'revolve' : 'tl' + f;
        const items = FEATURES.map(f => `<fx-icon name="${name(f)}" size="20"></fx-icon>`).join('');
        const ticks = FEATURES.map(() => `<i></i>`).join('');
        this.attachShadow({ mode: 'open' }).innerHTML = `
        <style>
            :host { display: flex; height: 55px; flex: none; box-sizing: border-box; background: #f1f1f1; border-top: 2px solid #dcdcdc; padding-left: 13px; align-items: flex-start; position: relative; }
            :host::before { content: ''; position: absolute; left: 0; top: -2px; width: 168px; height: 2px; background: #c8c8c8; }
            svg { display: block; flex: none; }
            .ctl { margin-top: 21px; }
            .strip { margin-left: 30px; margin-top: 18px; width: 800px; position: relative; flex: none; }
            .icons { display: flex; gap: 10px; }
            .ticks { display: flex; margin: 4px 0 0 10px; height: 6px; }
            .ticks i { display: block; width: 2px; margin-right: 28px; background: #ccc; flex: none; }
            .rail { margin-left: 10px; width: 782px; height: 3px; background: #ccc; }
            .mark { position: absolute; left: 797px; top: -7px; }
            .gear { margin: 19px 14px 0 auto; }
        </style>
        <svg class="ctl" width="15" height="16" viewBox="0 0 15 16" fill="#666"><rect width="3" height="16"/><path d="M15 0V16L4 8z"/></svg>
        <svg class="ctl" style="margin-left:17px" width="16" height="16" viewBox="0 0 16 16" fill="#666"><path d="M11 0V16L0 8z"/><rect x="13" y="4" width="3" height="8"/></svg>
        <svg class="ctl" style="margin-left:15px;margin-top:20px" width="15" height="18" viewBox="0 0 15 18" fill="#666"><path d="M0 0L15 9 0 18z"/></svg>
        <svg class="ctl" style="margin-left:15px" width="16" height="16" viewBox="0 0 16 16" fill="#666"><rect y="4" width="3" height="8"/><path d="M5 0L16 8 5 16z"/></svg>
        <svg class="ctl" style="margin-left:16px" width="15" height="16" viewBox="0 0 15 16" fill="#666"><path d="M0 0L11 8 0 16z"/><rect x="12" width="3" height="16"/></svg>
        <div class="strip">
            <div class="icons">${items}</div>
            <div class="ticks">${ticks}</div>
            <div class="rail"></div>
            <svg class="mark" width="16" height="41" viewBox="0 0 16 41"><path d="M0 0H16V3L11 9H5L0 3z" fill="#555"/><rect x="6.500" y="10" width="3" height="31" fill="#444"/></svg>
        </div>
        <svg class="gear" width="19" height="19" viewBox="0 0 19 19">${gear(9.5, 9.5, '#707070', '#f1f1f1')}</svg>`;
    }
}
customElements.define('time-line', TimeLine);
</script>
</body>
</html>
